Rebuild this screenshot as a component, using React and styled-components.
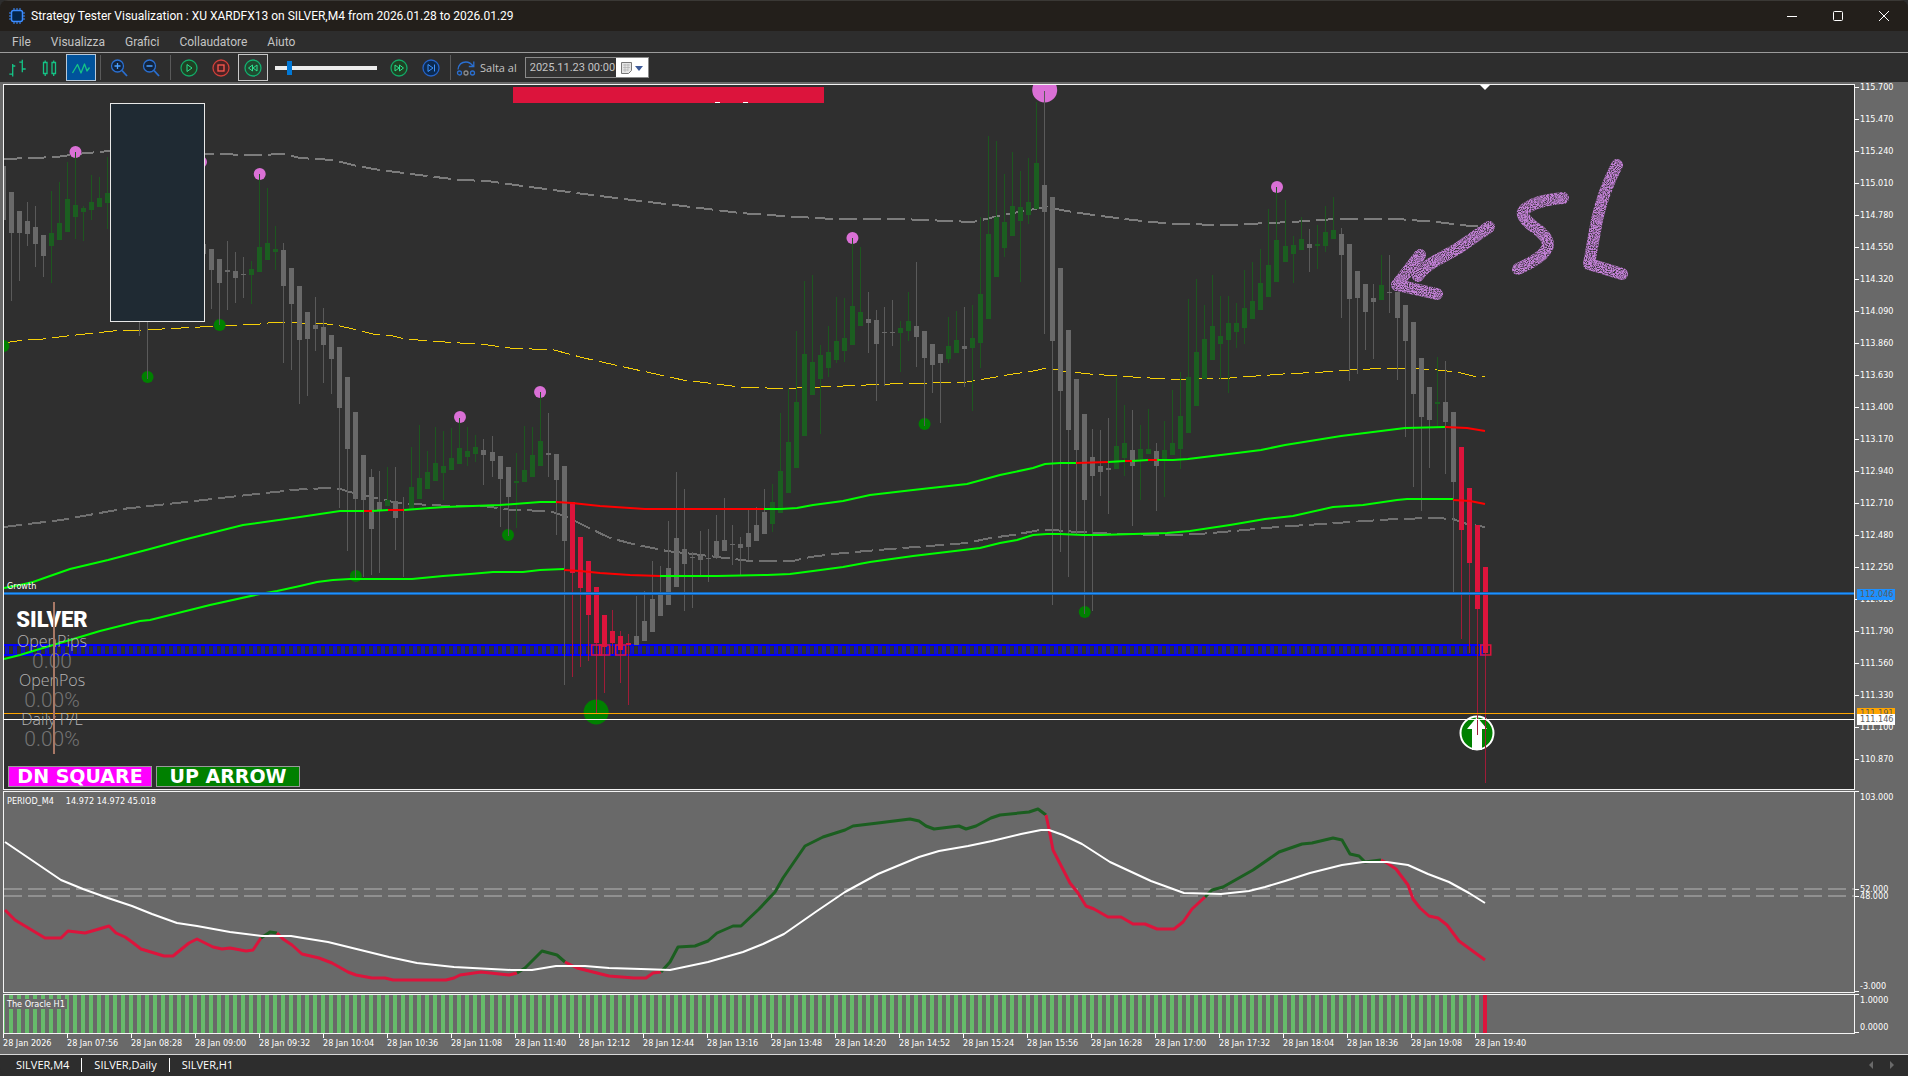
import { useState } from "react";
import styled, { createGlobalStyle } from "styled-components";

const UP = "#1b5e20";
const FLAT = "#696969";
const DOWN = "#dc143c";
const WICKS = { [UP]: "#1d561f", [FLAT]: "#5a5a5a", [DOWN]: "#a01c38" };

const barX = (i) => 3.4 + i * 8.01;

// bar index, color, high, low, body top, body bottom
const candles = [
  [0, FLAT, 166, 220, 166, 220], [1, FLAT, 192, 301, 192, 233], [2, FLAT, 211, 281, 211, 233],
  [3, FLAT, 202, 246, 221, 234], [4, FLAT, 206, 267, 227, 244], [5, FLAT, 235, 277, 235, 256],
  [6, UP, 191, 283, 233, 246], [7, UP, 182, 240, 223, 240], [8, UP, 162, 232, 199, 232],
  [9, UP, 152, 239, 205, 217], [10, UP, 206, 241, 208, 212], [11, UP, 175, 220, 202, 210],
  [12, UP, 177, 207, 198, 207], [13, UP, 157, 229, 193, 203], [17, FLAT, 260, 336, 260, 310],
  [18, FLAT, 280, 379, 280, 310], [25, FLAT, 244, 254, 244, 254], [26, FLAT, 249, 309, 249, 270],
  [27, FLAT, 259, 325, 259, 283], [28, FLAT, 241, 310, 270, 272], [29, FLAT, 252, 303, 271, 278],
  [30, FLAT, 257, 298, 274, 275], [31, UP, 261, 304, 269, 275], [32, UP, 174, 272, 247, 272],
  [33, UP, 188, 260, 243, 260], [34, UP, 226, 270, 249, 252], [35, FLAT, 243, 363, 250, 286],
  [36, FLAT, 268, 370, 268, 304], [37, FLAT, 286, 404, 286, 340], [38, FLAT, 312, 396, 312, 339],
  [39, FLAT, 297, 351, 325, 329], [40, FLAT, 308, 383, 327, 345], [41, FLAT, 335, 394, 335, 359],
  [42, FLAT, 347, 508, 347, 408], [43, FLAT, 377, 551, 377, 449], [44, FLAT, 412, 579, 412, 499],
  [45, FLAT, 455, 577, 455, 500], [46, FLAT, 469, 575, 477, 529], [47, FLAT, 471, 573, 502, 510],
  [48, UP, 467, 506, 500, 506], [49, FLAT, 467, 550, 501, 518], [50, FLAT, 497, 577, 509, 510],
  [51, UP, 447, 510, 487, 510], [52, UP, 425, 499, 478, 499], [53, UP, 451, 489, 472, 489],
  [54, UP, 427, 481, 463, 481], [55, UP, 431, 500, 466, 473], [56, UP, 428, 470, 458, 470],
  [57, UP, 418, 464, 448, 464], [58, UP, 427, 466, 451, 457], [59, UP, 435, 462, 447, 454],
  [60, FLAT, 439, 485, 450, 455], [61, FLAT, 436, 477, 452, 461], [62, FLAT, 456, 527, 456, 479],
  [63, FLAT, 467, 536, 467, 497], [64, UP, 453, 528, 481, 483], [65, UP, 426, 482, 470, 482],
  [66, UP, 427, 477, 455, 477], [67, UP, 392, 466, 441, 466], [68, FLAT, 413, 477, 453, 455],
  [69, FLAT, 454, 535, 454, 480], [70, FLAT, 466, 685, 466, 541], [71, DOWN, 502, 677, 502, 573],
  [72, DOWN, 537, 667, 537, 588], [73, DOWN, 561, 661, 561, 615], [74, DOWN, 587, 713, 587, 643],
  [75, DOWN, 615, 693, 615, 647], [76, DOWN, 610, 654, 631, 643], [77, DOWN, 631, 683, 636, 650],
  [78, DOWN, 634, 705, 643, 645], [79, FLAT, 596, 645, 636, 645], [80, FLAT, 591, 641, 621, 641],
  [81, FLAT, 561, 632, 599, 632], [82, FLAT, 566, 616, 593, 616], [83, FLAT, 521, 605, 568, 605],
  [84, FLAT, 472, 587, 538, 587], [85, FLAT, 489, 611, 549, 564], [86, FLAT, 552, 608, 557, 558],
  [87, FLAT, 531, 575, 556, 560], [88, FLAT, 529, 582, 558, 559], [89, FLAT, 515, 559, 541, 558],
  [90, FLAT, 498, 551, 540, 551], [91, FLAT, 525, 565, 544, 545], [92, FLAT, 537, 575, 544, 548],
  [93, FLAT, 510, 560, 533, 547], [94, FLAT, 507, 541, 525, 541], [95, FLAT, 489, 534, 512, 534],
  [96, UP, 484, 532, 502, 524], [97, UP, 413, 513, 471, 513], [98, UP, 389, 493, 442, 493],
  [99, UP, 331, 468, 402, 468], [100, UP, 281, 436, 354, 436], [101, UP, 275, 395, 362, 395],
  [102, UP, 345, 434, 355, 379], [103, UP, 326, 377, 352, 368], [104, UP, 297, 363, 341, 360],
  [105, UP, 298, 362, 338, 351], [106, UP, 238, 345, 306, 345], [107, UP, 247, 326, 312, 326],
  [108, FLAT, 292, 353, 319, 323], [109, FLAT, 310, 401, 320, 344], [110, FLAT, 307, 386, 332, 333],
  [111, FLAT, 300, 346, 332, 333], [112, UP, 321, 372, 328, 333], [113, UP, 292, 341, 321, 331],
  [114, FLAT, 262, 367, 326, 337], [115, FLAT, 331, 426, 331, 358], [116, FLAT, 344, 393, 344, 365],
  [117, FLAT, 354, 423, 354, 363], [118, UP, 317, 363, 346, 359], [119, UP, 311, 353, 340, 353],
  [120, FLAT, 307, 387, 346, 349], [121, UP, 305, 411, 338, 348], [122, UP, 217, 368, 294, 343],
  [123, UP, 136, 319, 234, 319], [124, UP, 141, 277, 217, 277], [125, UP, 174, 257, 222, 248],
  [126, UP, 152, 236, 206, 236], [127, UP, 171, 282, 207, 221], [128, UP, 158, 224, 202, 215],
  [129, UP, 102, 209, 163, 209], [130, FLAT, 91, 334, 185, 212], [131, FLAT, 197, 605, 197, 341],
  [132, FLAT, 268, 552, 268, 391], [133, FLAT, 330, 577, 330, 430], [134, FLAT, 379, 534, 379, 450],
  [135, FLAT, 414, 614, 414, 500], [136, FLAT, 429, 611, 457, 476], [137, FLAT, 430, 496, 466, 472],
  [138, FLAT, 418, 514, 468, 470], [139, UP, 377, 469, 446, 469], [140, UP, 405, 476, 443, 458],
  [141, FLAT, 410, 526, 450, 466], [142, UP, 425, 500, 449, 459], [143, UP, 409, 454, 449, 454],
  [144, FLAT, 443, 511, 451, 466], [145, UP, 421, 497, 450, 461], [146, UP, 390, 455, 443, 455],
  [147, UP, 372, 469, 416, 449], [148, UP, 299, 433, 377, 433], [149, UP, 279, 406, 352, 406],
  [150, UP, 305, 379, 339, 379], [151, UP, 275, 360, 326, 360], [152, UP, 296, 379, 336, 344],
  [153, UP, 296, 393, 323, 340], [154, UP, 303, 348, 323, 332], [155, UP, 270, 344, 308, 328],
  [156, UP, 262, 319, 301, 319], [157, UP, 249, 310, 283, 310], [158, UP, 209, 297, 265, 297],
  [159, UP, 187, 282, 240, 282], [160, UP, 200, 262, 246, 262], [161, UP, 236, 283, 245, 254],
  [162, UP, 217, 250, 239, 250], [163, FLAT, 229, 272, 244, 248], [164, UP, 225, 269, 244, 246],
  [165, UP, 206, 252, 232, 246], [166, UP, 197, 239, 230, 239], [167, FLAT, 228, 318, 234, 255],
  [168, FLAT, 244, 381, 244, 299], [169, FLAT, 271, 374, 271, 298], [170, FLAT, 284, 350, 284, 312],
  [171, FLAT, 284, 359, 298, 302], [172, UP, 255, 300, 285, 300], [173, FLAT, 255, 313, 292, 293],
  [174, FLAT, 292, 380, 292, 318], [175, FLAT, 305, 437, 305, 341], [176, FLAT, 322, 487, 322, 394],
  [177, FLAT, 358, 511, 358, 417], [178, FLAT, 387, 468, 387, 420], [179, UP, 357, 427, 402, 404],
  [180, FLAT, 361, 474, 402, 422], [181, FLAT, 412, 593, 412, 482], [182, DOWN, 447, 639, 447, 530],
  [183, DOWN, 488, 653, 488, 563], [184, DOWN, 525, 735, 525, 609], [185, DOWN, 567, 783, 567, 653],
];

// bar index, y, color, radius
const dots = [
  [0, 346, "#008000", 6], [9, 152, "#da70d6", 6], [18, 377, "#008000", 6], [27, 325, "#008000", 6],
  [32, 174, "#da70d6", 6], [44, 576, "#008000", 6], [57, 417, "#da70d6", 6], [63, 535, "#008000", 6],
  [67, 392, "#da70d6", 6], [74, 712, "#008000", 12.5], [106, 238, "#da70d6", 6], [115, 424, "#008000", 6],
  [130, 90, "#da70d6", 12.5], [135, 612, "#008000", 6], [159, 187, "#da70d6", 6],
];

const LIME = "#00ff00";
const RED = "#ff0000";

const averages = [
  [LIME, "4,588 20,585 33,582 50,576 70,569 108,560 150,549 183,540 243,525 300,517 320,514 340,511 364,511"],
  [RED, "364,511 372,511"],
  [LIME, "372,511 388,510"],
  [RED, "388,510 404,510"],
  [LIME, "404,510 430,508 445,507 500,505 540,502 556,502"],
  [RED, "556,502 572,503 600,506 645,509 764,509"],
  [LIME, "764,509 781,509 797,508 813,505 843,501 870,495 913,490 967,484 1000,475 1033,468 1045,464 1060,463 1076,463"],
  [RED, "1076,463 1108,462"],
  [LIME, "1108,462 1125,461"],
  [RED, "1125,461 1132,461"],
  [LIME, "1132,461 1148,460"],
  [RED, "1148,460 1157,460"],
  [LIME, "1157,460 1173,460 1188,459 1229,454 1261,450 1285,445 1310,441 1341,436 1365,433 1397,429 1405,428 1445,427"],
  [RED, "1445,427 1467,428 1485,431"],
  [LIME, "4,659 20,655 33,651 53,645 80,637 100,631 140,621 150,620 210,605 260,594 277,591 300,586 317,582 333,580 350,579 412,579 443,576 470,574 493,572 523,572 540,570 564,569"],
  [RED, "564,570 580,571 600,573 630,575 660,576"],
  [LIME, "660,576 717,576 767,575 790,574 813,571 843,567 870,562 913,556 980,548 1000,543 1017,540 1033,535 1047,534 1060,534 1083,535 1100,535 1167,533 1190,531 1230,525 1265,519 1293,516 1333,507 1363,505 1397,500 1407,499 1453,499"],
  [RED, "1453,500 1470,501 1485,504"],
];

const bands = [
  ["#7c7c7c", 2, "4,159 31,158 57,157 77,154 110,151 205,154 260,155 283,154 300,158 333,160 357,166 380,170 427,176 460,180 487,181 530,187 584,194 640,201 700,208 740,213 783,216 833,219 900,219 973,222 990,218 1013,213 1045,207 1067,211 1093,215 1133,220 1173,224 1230,225 1267,223 1293,222 1317,220 1340,219 1397,219 1437,222 1470,226 1488,226"],
  ["#f5cf08", 1, "4,343 30,339 43,339 67,336 113,331 143,330 200,327 220,326 260,324 277,322 327,324 340,326 353,329 373,334 393,336 405,339 430,341 460,343 480,344 510,348 554,350 584,358 633,369 683,380 700,382 740,387 767,388 797,388 843,386 890,384 967,382 990,378 1013,374 1033,371 1047,368 1063,371 1090,374 1133,377 1167,379 1197,379 1230,378 1283,374 1323,372 1350,370 1390,368 1410,368 1437,370 1457,372 1473,376 1485,377"],
  ["#707070", 2, "4,527 61,520 122,509 195,501 256,494 304,489 333,488 340,489 350,492 367,496 393,502 413,504 450,506 483,506 513,510 550,511 567,517 583,525 610,538 633,544 667,551 693,554 717,557 750,561 793,561 810,557 843,553 890,549 967,543 990,538 1013,535 1040,530 1053,530 1077,532 1117,534 1167,535 1200,534 1278,527 1350,522 1396,519 1435,518 1453,519 1467,524 1485,527"],
];

const signal = "4,841 60,879 82,888 107,897 131,905 151,913 176,922 196,925 229,931 261,935 290,935 302,937 327,941 388,956 416,962 453,966 510,969 531,969 555,965 584,965 608,967 640,968 669,969 707,961 742,951 762,943 783,933 816,910 844,891 877,873 918,856 938,850 967,845 991,840 1020,833 1040,829 1048,829 1062,834 1081,843 1109,861 1150,880 1183,892 1220,893 1248,890 1264,886 1284,880 1309,872 1341,864 1362,861 1386,861 1407,864 1427,873 1448,881 1468,892 1484,902";

const oscillator = [
  [DOWN, "4,909 14,919 44,937 60,937 67,930 84,932 98,928 108,925 115,932 124,936 131,941 140,948 163,955 172,955 188,942 196,938 212,946 221,948 229,947 245,950 252,949 260,937"],
  [UP, "260,937 269,931 276,932"],
  [DOWN, "276,932 282,938 291,944 301,953 318,957 331,962 347,971 355,974 371,977 384,977 392,979 445,979 453,977 459,974 480,971 508,974 516,972"],
  [UP, "516,972 524,967 541,950 556,954 564,961"],
  [DOWN, "564,961 576,967 592,971 608,975 633,977 645,977 652,972 660,971"],
  [UP, "660,971 669,961 677,946 694,945 707,940 716,932 732,925 740,925 758,908 774,891 782,877 804,845 822,836 844,829 852,825 877,822 909,818 918,820 925,825 933,828 958,825 965,828 975,825 990,817 999,814 1028,811 1037,808 1045,814"],
  [DOWN, "1045,814 1048,828 1052,849 1069,882 1077,892 1085,905 1093,908 1107,916 1120,916 1132,923 1144,923 1156,928 1173,928 1182,921 1191,908 1204,896"],
  [UP, "1204,896 1211,889 1222,886 1252,869 1278,851 1301,843 1311,842 1332,837 1341,839 1349,853 1358,855 1364,861 1380,859"],
  [DOWN, "1380,859 1386,862 1395,868 1407,884 1412,898 1419,907 1428,915 1437,917 1446,924 1458,940 1484,959"],
];

const prices = Array.from({ length: 22 }, (_, i) => (115.7 - i * 0.23).toFixed(3));

const dates = Array.from({ length: 24 }, (_, i) => {
  if (i === 0) return "28 Jan 2026";
  const min = 7 * 60 + 24 + i * 32;
  const hh = String(Math.floor(min / 60)).padStart(2, "0");
  return `28 Jan ${hh}:${String(min % 60).padStart(2, "0")}`;
});

const menus = ["File", "Visualizza", "Grafici", "Collaudatore", "Aiuto"];
const tabs = ["SILVER,M4", "SILVER,Daily", "SILVER,H1"];
const bars = Array.from({ length: 186 }, (_, i) => i);

const PriceChart = () => (
  <Plot viewBox="4 85 1850 704" preserveAspectRatio="none" role="img" aria-label="SILVER M4">
    <defs>
      <filter id="crayon" x="-10%" y="-10%" width="120%" height="120%">
        <feTurbulence type="fractalNoise" baseFrequency="0.95" numOctaves="2" result="noise" />
        <feColorMatrix in="noise" type="matrix" values="0 0 0 0 0  0 0 0 0 0  0 0 0 0 0  0 3 0 0 -0.75" result="grain" />
        <feComposite in="SourceGraphic" in2="grain" operator="in" />
      </filter>
    </defs>
    <g shapeRendering="crispEdges">
      {bands.map(([color, width, points]) => (
        <polyline key={color} points={points} fill="none" stroke={color} strokeWidth={width} strokeDasharray="18 6" />
      ))}
    </g>
    <g shapeRendering="crispEdges">
      {bars.slice(0, 185).map((i) => {
        const x = Math.floor(barX(i));
        return (
          <g key={i}>
            <rect x={x + 2} y="645" width="4" height="10" fill="#1a1aa8" />
            <path d={`M${x + 2.5} 645v10M${x + 5.5} 645v10`} stroke="#0a0ad8" />
          </g>
        );
      })}
      <path d="M4 645H1486M4 655H1486" stroke="#0000ff" strokeWidth="2" />
    </g>
    {dots.map(([i, y, color, r]) => (
      <circle key={i} cx={barX(i)} cy={y} r={r} fill={color} />
    ))}
    <circle cx="201" cy="162" r="6" fill="#da70d6" />
    <circle cx="1477" cy="733" r="16.5" fill="#008000" stroke="#ffffff" strokeWidth="2" />
    <path d="M1477 717l10 12h-5v21h-10v-21h-5z" fill="#ffffff" />
    <g shapeRendering="crispEdges">
      {candles.map(([i, color, high, low, top, bottom]) => {
        const x = Math.floor(barX(i));
        return (
          <g key={i}>
            <rect x={x} y={high} width="1" height={low - high} fill={WICKS[color]} />
            <rect x={x - 2} y={top} width="5" height={bottom - top} fill={color} />
          </g>
        );
      })}
    </g>
    {[74, 75, 77, 185].map((i) => (
      <rect key={i} x={barX(i) - 4.5} y="645" width="10" height="10" fill="none" stroke={DOWN} strokeWidth="1.5" />
    ))}
    {averages.map(([color, points]) => (
      <polyline key={points} points={points} fill="none" stroke={color} strokeWidth="2" />
    ))}
    <g shapeRendering="crispEdges">
      <rect x="4" y="592" width="1850" height="3" fill="#1a66b0" />
      <rect x="4" y="593" width="1850" height="1" fill="#1e90ff" />
      <rect x="4" y="713" width="1850" height="1" fill="#ffa500" />
      <rect x="4" y="719" width="1850" height="1" fill="#ffffff" />
      <rect x="513" y="87" width="311" height="16" fill={DOWN} />
      <rect x="715" y="102" width="5" height="1" fill="#ffffff" />
      <rect x="743" y="102" width="5" height="1" fill="#ffffff" />
    </g>
    <rect x="110.5" y="103.5" width="94" height="218" fill="#1f2a33" stroke="#e8e8e8" />
    <path d="M1480 85h10l-5 5z" fill="#ffffff" />
    <g fill="none" stroke="#c481d8" strokeWidth="12" strokeLinecap="round" strokeLinejoin="round" filter="url(#crayon)">
      <path d="M1489 227L1457 249L1437 260Q1424 267 1418 276" />
      <path d="M1420 255L1397 285L1437 294" />
      <path d="M1563 198Q1537 200 1525 209Q1518 215 1534 227Q1553 240 1546 250Q1540 259 1518 269" />
      <path d="M1617 165Q1603 192 1597 220L1589 264L1622 274" />
    </g>
  </Plot>
);

const Oscillator = () => (
  <Plot viewBox="4 792 1850 200" preserveAspectRatio="none" role="img" aria-label="PERIOD_M4">
    <path d="M4 889H1854M4 896H1854" stroke="#909090" strokeWidth="2" strokeDasharray="18 6" />
    <g fill="none" strokeLinejoin="round" transform="translate(1 1)">
      {oscillator.map(([color, points]) => (
        <polyline key={points} points={points} stroke={color} strokeWidth="3" />
      ))}
      <polyline points={signal} stroke="#ffffff" strokeWidth="2" />
    </g>
  </Plot>
);

const Oracle = () => (
  <Plot viewBox="4 995 1850 38" preserveAspectRatio="none" role="img" aria-label="The Oracle H1">
    {bars.map((i) => (
      <rect key={i} x={Math.floor(barX(i)) - 2} y="995" width="4" height="38" fill={i === 185 ? DOWN : "#66bb6a"} shapeRendering="crispEdges" />
    ))}
  </Plot>
);

const App = () => {
  const [speed, setSpeed] = useState(12);
  const [date, setDate] = useState("2025.11.23 00:00");

  return (
    <Window>
      <GlobalStyle />
      <TitleBar>
        <Icon width="16" height="16" viewBox="0 0 16 16">
          <rect x="2.5" y="2.5" width="11" height="11" rx="2" fill="#04254a" stroke="#3b8bff" strokeWidth="1.5" />
          <path d="M5 0v2M8 0v2M11 0v2M5 14v2M8 14v2M11 14v2M0 5h2M0 8h2M0 11h2M14 5h2M14 8h2M14 11h2" stroke="#3b8bff" />
        </Icon>
        <Title>Strategy Tester Visualization : XU XARDFX13 on SILVER,M4 from 2026.01.28 to 2026.01.29</Title>
        <Caption aria-label="Minimize">
          <Icon width="10" height="10" viewBox="0 0 10 10"><path d="M0 5.5h10" stroke="#fff" /></Icon>
        </Caption>
        <Caption aria-label="Maximize">
          <Icon width="10" height="10" viewBox="0 0 10 10"><rect x=".5" y=".5" width="9" height="9" rx="1" fill="none" stroke="#fff" /></Icon>
        </Caption>
        <Caption aria-label="Close">
          <Icon width="10" height="10" viewBox="0 0 10 10"><path d="M0 0l10 10M10 0L0 10" stroke="#fff" /></Icon>
        </Caption>
      </TitleBar>

      <MenuBar>
        {menus.map((name) => <MenuItem key={name}>{name}</MenuItem>)}
      </MenuBar>

      <Toolbar>
        <Tool aria-label="Bars">
          <Icon width="20" height="20" viewBox="0 0 20 20">
            <path d="M5.7 6v12.500M2.300 16.200h3.400M5.700 8h2.600M15.300 1.800v12.400M12.300 4.200h3M15.300 11h3.400" fill="none" stroke="#14c486" strokeWidth="1.300" />
          </Icon>
        </Tool>
        <Tool aria-label="Candles">
          <Icon width="20" height="20" viewBox="0 0 20 20">
            <path d="M4.500 4.500h3.500v11h-3.500zM6.200 2.500v2M6.200 15.500v2.500M13 4.500h3.500v11h-3.500zM14.700 2.500v2M14.700 15.500v2.500" fill="none" stroke="#14c486" strokeWidth="1.300" />
          </Icon>
        </Tool>
        <Tool $bg="#00529b" $edge="#b8c8d8" aria-label="Line">
          <Icon width="20" height="20" viewBox="0 0 20 20">
            <path d="M1.500 15L6.500 6.500L10 15L13.500 6L16 13L18.500 9.500" fill="none" stroke="#14c486" strokeWidth="1.300" strokeLinejoin="round" />
          </Icon>
        </Tool>
        <Divider />
        <Tool aria-label="Zoom in">
          <Icon width="20" height="20" viewBox="0 0 20 20">
            <circle cx="8.500" cy="8" r="6" fill="#12233c" stroke="#2a6fd0" strokeWidth="1.300" />
            <path d="M13 12.500l5 5.500" stroke="#2a6fd0" strokeWidth="1.800" />
            <path d="M5.500 8h6M8.500 5v6" stroke="#4ba0ff" strokeWidth="1.300" />
          </Icon>
        </Tool>
        <Tool aria-label="Zoom out">
          <Icon width="20" height="20" viewBox="0 0 20 20">
            <circle cx="8.500" cy="8" r="6" fill="#12233c" stroke="#2a6fd0" strokeWidth="1.300" />
            <path d="M13 12.500l5 5.500" stroke="#2a6fd0" strokeWidth="1.800" />
            <path d="M5.500 8h6" stroke="#4ba0ff" strokeWidth="1.300" />
          </Icon>
        </Tool>
        <Divider />
        <Tool aria-label="Play">
          <Icon width="20" height="20" viewBox="0 0 20 20">
            <circle cx="10" cy="10" r="8" fill="#1f4023" stroke="#12a866" strokeWidth="1.300" />
            <path d="M8 6.500v7l5-3.500z" fill="none" stroke="#2be08e" />
          </Icon>
        </Tool>
        <Tool aria-label="Stop">
          <Icon width="20" height="20" viewBox="0 0 20 20">
            <circle cx="10" cy="10" r="8" fill="#4a2224" stroke="#d0403a" strokeWidth="1.300" />
            <rect x="7" y="7" width="6" height="6" fill="none" stroke="#ff5a50" strokeWidth="1.300" />
          </Icon>
        </Tool>
        <Tool $bg="#333333" $edge="#c8c8c8" aria-label="Slower">
          <Icon width="20" height="20" viewBox="0 0 20 20">
            <circle cx="10" cy="10" r="8" fill="#1f4a30" stroke="#12b070" strokeWidth="1.300" />
            <path d="M9.500 7v6l-4-3zM14 7v6l-4-3z" fill="none" stroke="#2be08e" />
          </Icon>
        </Tool>
        <Slider type="range" min="0" max="100" value={speed} aria-label="Speed" onChange={(e) => setSpeed(e.target.value)} />
        <Tool aria-label="Faster">
          <Icon width="20" height="20" viewBox="0 0 20 20">
            <circle cx="10" cy="10" r="8" fill="#1f4023" stroke="#12a866" strokeWidth="1.300" />
            <path d="M6 7v6l4-3zM10.500 7v6l4-3z" fill="none" stroke="#2be08e" />
          </Icon>
        </Tool>
        <Tool aria-label="Skip to">
          <Icon width="20" height="20" viewBox="0 0 20 20">
            <circle cx="10" cy="10" r="8" fill="#0c2a50" stroke="#2563c8" strokeWidth="1.300" />
            <path d="M7 6.500v7l5-3.500zM13.500 6.500v7" fill="none" stroke="#3d93ff" />
          </Icon>
        </Tool>
        <Divider />
        <JumpLabel htmlFor="jump">
          <Icon width="20" height="20" viewBox="0 0 20 20">
            <path d="M2 11.500Q3 4 10 4Q14 4 17 8M17.800 3.500v5h-5" fill="none" stroke="#2a6fd0" strokeWidth="1.300" />
            <circle cx="3.500" cy="15" r="2" fill="none" stroke="#2a6fd0" strokeWidth="1.300" />
            <circle cx="10" cy="15" r="2" fill="none" stroke="#8a8a8a" strokeWidth="1.300" />
            <circle cx="16.500" cy="15" r="2" fill="none" stroke="#2a6fd0" strokeWidth="1.300" />
          </Icon>
          Salta al
        </JumpLabel>
        <DateBox>
          <DateInput id="jump" value={date} onChange={(e) => setDate(e.target.value)} />
          <DateButton aria-label="Open calendar">
            <Icon width="24" height="14" viewBox="0 0 24 14">
              <path d="M1.500 1.500h10v8l-3 3h-7z" fill="#e4e4e4" stroke="#777" />
              <path d="M3 4h7M3 6.500h7M3 9h5M5 3v8M8 3v7" stroke="#aaa" strokeWidth=".6" />
              <path d="M15 5h8l-4 5z" fill="#3d5a98" />
            </Icon>
          </DateButton>
        </DateBox>
      </Toolbar>

      <Workspace>
        <Pane $dark $first>
          <PriceChart />
          <GrowthNote>Growth</GrowthNote>
          <Hud>
            <Symbol>SILVER</Symbol>
            <HudName>OpenPips</HudName>
            <HudValue>0.00</HudValue>
            <HudName>OpenPos</HudName>
            <HudValue>0.00%</HudValue>
            <HudName>Daily P/L</HudName>
            <HudValue>0.00%</HudValue>
          </Hud>
          <Signals>
            <SignalButton $bg="#ff00ff">DN SQUARE</SignalButton>
            <SignalButton $bg="#008000">UP ARROW</SignalButton>
          </Signals>
        </Pane>
        <PriceAxis>
          {prices.map((p) => <Tick key={p}>{p}</Tick>)}
          <Badge $y={507} $h={708} $bg="#1e90ff">112.046</Badge>
          <Badge $y={626} $h={708} $bg="#ffa500">111.191</Badge>
          <Badge $y={632} $h={708} $bg="#ffffff">111.146</Badge>
        </PriceAxis>

        <Pane>
          <Oscillator />
          <PaneNote>
            <span>PERIOD_M4</span>
            <span>14.972 14.972 45.018</span>
          </PaneNote>
        </Pane>
        <PaneAxis>
          <span>103.000</span>
          <Level $y={93}>52.000</Level>
          <Level $y={100}>48.000</Level>
          <span>-3.000</span>
        </PaneAxis>

        <Pane>
          <Oracle />
          <PaneNote $bg="#696969">The Oracle H1</PaneNote>
        </Pane>
        <PaneAxis>
          <span>1.0000</span>
          <span>0.0000</span>
        </PaneAxis>
      </Workspace>

      <DateAxis>
        {dates.map((d) => <DateTick key={d}>{d}</DateTick>)}
      </DateAxis>

      <TabBar>
        {tabs.map((t) => <Tab key={t}>{t}</Tab>)}
        <Spacer />
        <Icon width="32" height="10" viewBox="0 0 32 10">
          <path d="M5 1v8l-4-4zM22 1v8l4-4z" fill="#6a6a6a" />
        </Icon>
      </TabBar>
    </Window>
  );
};

export default App;

const GlobalStyle = createGlobalStyle`
  * {
    box-sizing: border-box;
  }
  body {
    margin: 0;
    background: #2d2d2d;
    font-family: "Open Sans", "Noto Sans", sans-serif;
    font-size: 12px;
    color: #ffffff;
  }
  button, input {
    font: inherit;
    color: inherit;
    margin: 0;
    padding: 0;
  }
`;

const Window = styled.div`
  display: flex;
  flex-direction: column;
  height: 100vh;
  min-height: 640px;
  overflow: hidden;
  background: #2d2d2d;
  border-radius: 8px;
`;

const Icon = styled.svg`
  display: block;
  flex: none;
`;

const TitleBar = styled.header`
  display: flex;
  align-items: center;
  flex: none;
  height: 31px;
  padding: 0 1px 1px 9px;
  background: #231f1b;
  border-top: 1px solid #3a3835;
`;

const Title = styled.h1`
  flex: 1;
  margin: 0 0 0 6px;
  font-family: Roboto, sans-serif;
  font-size: 12px;
  font-weight: 400;
`;

const Caption = styled.button`
  display: flex;
  align-items: center;
  justify-content: center;
  width: 46px;
  height: 28px;
  background: none;
  border: 0;
`;

const MenuBar = styled.nav`
  display: flex;
  flex: none;
  height: 22px;
  padding-left: 2px;
  border-bottom: 1px solid #9b9b9b;
`;

const MenuItem = styled.button`
  padding: 0 10px;
  font-family: Roboto, sans-serif;
  font-size: 12px;
  line-height: 20px;
  color: #c4c4c4;
  background: none;
  border: 0;
`;

const Toolbar = styled.div`
  display: flex;
  align-items: center;
  flex: none;
  height: 29px;
  padding-left: 2px;
  gap: 2px;
`;

const Tool = styled.button`
  display: flex;
  align-items: center;
  justify-content: center;
  width: 30px;
  height: 27px;
  background: ${props => props.$bg || "none"};
  border: 1px solid ${props => props.$edge || "transparent"};
`;

const Divider = styled.span`
  width: 1px;
  height: 25px;
  margin: 0 1px 0 2px;
  background: #5a5a5a;
`;

const Slider = styled.input`
  appearance: none;
  width: 102px;
  height: 14px;
  margin: 0 5px;
  background: transparent;

  &::-webkit-slider-runnable-track {
    height: 4px;
    background: #ececec;
  }
  &::-webkit-slider-thumb {
    appearance: none;
    width: 5px;
    height: 14px;
    margin-top: -5px;
    background: #0078d7;
  }
`;

const JumpLabel = styled.label`
  display: flex;
  align-items: center;
  gap: 4px;
  margin-left: 2px;
  font-size: 11px;
  color: #c4c4c4;
`;

const DateBox = styled.div`
  display: flex;
  height: 21px;
  margin-left: 6px;
  border: 1px solid #8a8a8a;
`;

const DateInput = styled.input`
  width: 90px;
  padding-left: 4px;
  font-family: Roboto, sans-serif;
  font-size: 11px;
  color: #c4c4c4;
  background: #333333;
  border: 0;
`;

const DateButton = styled.button`
  display: flex;
  align-items: center;
  justify-content: center;
  width: 32px;
  background: #ffffff;
  border: 0;
`;

const Workspace = styled.main`
  display: grid;
  flex: 1;
  grid-template-columns: minmax(0, 1fr) 53px;
  grid-template-rows: minmax(0, 1fr) 202px 40px;
  row-gap: 1px;
  min-height: 0;
  padding-left: 3px;
  background: #696969;
  font-family: "DejaVu Sans Condensed", Tahoma, sans-serif;
  font-size: 9px;
  line-height: 10px;
`;

const Pane = styled.section`
  position: relative;
  min-height: 0;
  margin-top: ${props => (props.$first ? "2px" : "0")};
  background: ${props => (props.$dark ? "#2f2f2f" : "#696969")};
  border: 1px solid #f4f4f4;
`;

const Plot = styled.svg`
  display: block;
  width: 100%;
  height: 100%;
`;

const PaneNote = styled.span`
  position: absolute;
  top: 4px;
  left: 1px;
  display: flex;
  gap: 12px;
  padding: 0 2px;
  background: ${props => props.$bg || "none"};
`;

const GrowthNote = styled.span`
  position: absolute;
  bottom: 198px;
  left: 3px;
`;

const Hud = styled.div`
  position: absolute;
  bottom: 40px;
  left: 0;
  width: 96px;
  text-align: center;

  &::after {
    content: "";
    position: absolute;
    top: -6px;
    bottom: -5px;
    left: 49px;
    width: 2px;
    background: #a87866;
  }
`;

const Symbol = styled.div`
  font-family: Impact, Roboto, sans-serif;
  font-size: 22px;
  font-weight: 900;
  line-height: 24px;
`;

const HudName = styled.div`
  font-family: "Open Sans", sans-serif;
  font-size: 16px;
  font-weight: 300;
  line-height: 19px;
  color: #b4b4b4;
`;

const HudValue = styled.div`
  font-family: Roboto, sans-serif;
  font-size: 21px;
  font-weight: 300;
  line-height: 20px;
  color: #747474;
`;

const Signals = styled.div`
  position: absolute;
  bottom: 2px;
  left: 4px;
  display: flex;
  gap: 4px;
`;

const SignalButton = styled.button`
  width: 144px;
  height: 21px;
  font-family: "Arial Black", "DejaVu Sans", sans-serif;
  font-size: 19px;
  font-weight: 700;
  line-height: 19px;
  background: ${props => props.$bg};
  border: 1px solid #9a9a9a;
`;

const PriceAxis = styled.div`
  position: relative;
  display: flex;
  flex-direction: column;
  justify-content: space-between;
  padding-bottom: 26px;
`;

const Tick = styled.span`
  display: flex;
  align-items: center;
  gap: 1px;

  &::before {
    content: "";
    width: 4px;
    height: 1px;
    background: #ffffff;
  }
`;

const Badge = styled.span`
  position: absolute;
  top: ${props => (props.$y / props.$h) * 100}%;
  left: 2px;
  width: 38px;
  height: 11px;
  padding-left: 3px;
  line-height: 11px;
  color: #5c5c5c;
  background: ${props => props.$bg};
`;

const PaneAxis = styled.div`
  position: relative;
  display: flex;
  flex-direction: column;
  justify-content: space-between;
  padding: 0 0 1px 5px;

  &::before, &::after {
    content: "";
    width: 4px;
    height: 1px;
    margin-left: -5px;
    background: #ffffff;
  }
  & > span:first-child {
    margin-bottom: auto;
  }
`;

const Level = styled(Tick)`
  position: absolute;
  top: ${props => props.$y}px;
  left: 0;
`;

const DateAxis = styled.div`
  display: flex;
  flex: none;
  height: 21px;
  padding-left: 3px;
  overflow: hidden;
  background: #696969;
  border-bottom: 1px solid #d8d8d8;
  font-family: "DejaVu Sans Condensed", Tahoma, sans-serif;
  font-size: 9px;
  line-height: 10px;
`;

const DateTick = styled.span`
  flex: 0 0 64px;
  white-space: nowrap;

  &::before {
    content: "";
    display: block;
    width: 1px;
    height: 4px;
    background: #ffffff;
  }
`;

const TabBar = styled.footer`
  display: flex;
  align-items: center;
  flex: none;
  height: 21px;
  padding: 0 8px 2px 3px;
`;

const Tab = styled.button`
  padding: 0 12px;
  font-size: 11px;
  line-height: 14px;
  background: none;
  border: 0;
  border-left: 1px solid transparent;

  & + & {
    border-left-color: #ffffff;
  }
`;

const Spacer = styled.span`
  flex: 1;
`;
